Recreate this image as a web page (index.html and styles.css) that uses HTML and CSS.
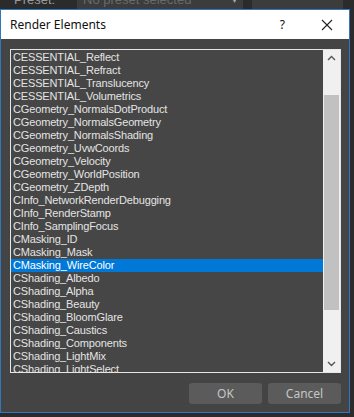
FILE: index.html
```html
<!DOCTYPE html>
<html lang="en">
<head>
    <meta charset="UTF-8">
    <title>Render Elements</title>
    <link rel="stylesheet" href="styles.css">
</head>
<body>
    <div class="backdrop">
        <span class="preset-label">Preset:</span>
        <span class="preset-select">No preset selected <span class="caret">&#9662;</span></span>
        <span class="preset-side"></span>
    </div>

    <div class="dialog">
        <div class="titlebar">
            <span class="title">Render Elements</span>
            <span class="help">?</span>
            <svg class="close" width="12" height="12" viewBox="0 0 12 12">
                <path d="M1 1 L11 11 M11 1 L1 11" stroke="#222" stroke-width="1.1" fill="none"/>
            </svg>
        </div>
        <div class="content">
            <div class="listbox">
                <ul class="items" id="items"></ul>
                <div class="scrollbar">
                    <svg class="arrow" width="17" height="17" viewBox="0 0 17 17">
                        <path d="M5 10 L8.5 6.5 L12 10" stroke="#555" stroke-width="1.4" fill="none"/>
                    </svg>
                    <div class="track"><div class="thumb"></div></div>
                    <svg class="arrow" width="17" height="17" viewBox="0 0 17 17">
                        <path d="M5 7 L8.5 10.5 L12 7" stroke="#555" stroke-width="1.4" fill="none"/>
                    </svg>
                </div>
            </div>
            <div class="buttons">
                <button>OK</button>
                <button>Cancel</button>
            </div>
        </div>
    </div>

    <script>
        const names = [
            'CESSENTIAL_Reflect', 'CESSENTIAL_Refract', 'CESSENTIAL_Translucency', 'CESSENTIAL_Volumetrics',
            'CGeometry_NormalsDotProduct', 'CGeometry_NormalsGeometry', 'CGeometry_NormalsShading',
            'CGeometry_UvwCoords', 'CGeometry_Velocity', 'CGeometry_WorldPosition', 'CGeometry_ZDepth',
            'CInfo_NetworkRenderDebugging', 'CInfo_RenderStamp', 'CInfo_SamplingFocus',
            'CMasking_ID', 'CMasking_Mask', 'CMasking_WireColor',
            'CShading_Albedo', 'CShading_Alpha', 'CShading_Beauty', 'CShading_BloomGlare',
            'CShading_Caustics', 'CShading_Components', 'CShading_LightMix', 'CShading_LightSelect'
        ];
        const list = document.getElementById('items');
        names.forEach(name => {
            const li = document.createElement('li');
            li.textContent = name;
            if (name === 'CMasking_WireColor') li.className = 'selected';
            list.appendChild(li);
        });
    </script>
</body>
</html>
```

FILE: styles.css
```css
body {
    margin: 0;
    background-color: #2b2b2b;
    font-family: "Liberation Sans", Arial, sans-serif;
    overflow: hidden;
}
.backdrop {
    height: 9px;
    display: flex;
    align-items: flex-end;
    overflow: hidden;
    font-size: 13px;
    color: #9a9a9a;
}
.preset-label {
    margin-left: 14px;
    width: 63px;
    line-height: 18px;
}
.preset-select {
    width: 160px;
    height: 18px;
    line-height: 18px;
    padding-left: 6px;
    background-color: #3c3c3c;
    color: #6a6a6a;
    position: relative;
}
.caret {
    position: absolute;
    right: 6px;
    color: #aaa;
    font-size: 10px;
}
.preset-side {
    margin-left: 9px;
    width: 91px;
    height: 18px;
    background-color: #3c3c3c;
}
.dialog {
    width: 348px;
    border: 1px solid #2f78bd;
    background-color: #444444;
}
.titlebar {
    height: 29px;
    background-color: #ffffff;
    display: flex;
    align-items: center;
    color: #111;
}
.title {
    font-family: "Noto Sans", sans-serif;
    font-size: 12px;
    margin-left: 9px;
    flex: 1;
}
.help {
    font-family: "Noto Sans", sans-serif;
    font-size: 12px;
    margin-right: 36px;
}
.close {
    margin-right: 16px;
}
.content {
    padding: 10px 8px 8px 9px;
}
.listbox {
    height: 322px;
    border: 1px solid #e6e6e6;
    background-color: #464646;
    display: flex;
}
.items {
    list-style: none;
    margin: 0;
    padding: 1px 0 0;
    flex: 1;
    overflow: hidden;
}
.items li {
    height: 13px;
    line-height: 13px;
    padding-left: 2px;
    font-size: 11px;
    letter-spacing: -0.15px;
    color: #e4e4e4;
    white-space: nowrap;
}
.items li.selected {
    background-color: #0078d7;
    color: #ffffff;
}
.scrollbar {
    width: 17px;
    background-color: #f0f0f0;
    display: flex;
    flex-direction: column;
}
.arrow {
    display: block;
    flex: none;
}
.track {
    flex: 1;
    padding-top: 28px;
    padding-bottom: 45px;
}
.thumb {
    height: 100%;
    margin: 0 1px;
    background-color: #c1c1c1;
}
.buttons {
    display: flex;
    justify-content: flex-end;
    gap: 6px;
    margin-top: 10px;
}
button {
    width: 73px;
    height: 21px;
    border: none;
    border-radius: 3px;
    background-color: #5b5b5b;
    color: #c6c6c6;
    font-family: "Noto Sans", sans-serif;
    font-size: 12px;
    padding: 0;
}
```
